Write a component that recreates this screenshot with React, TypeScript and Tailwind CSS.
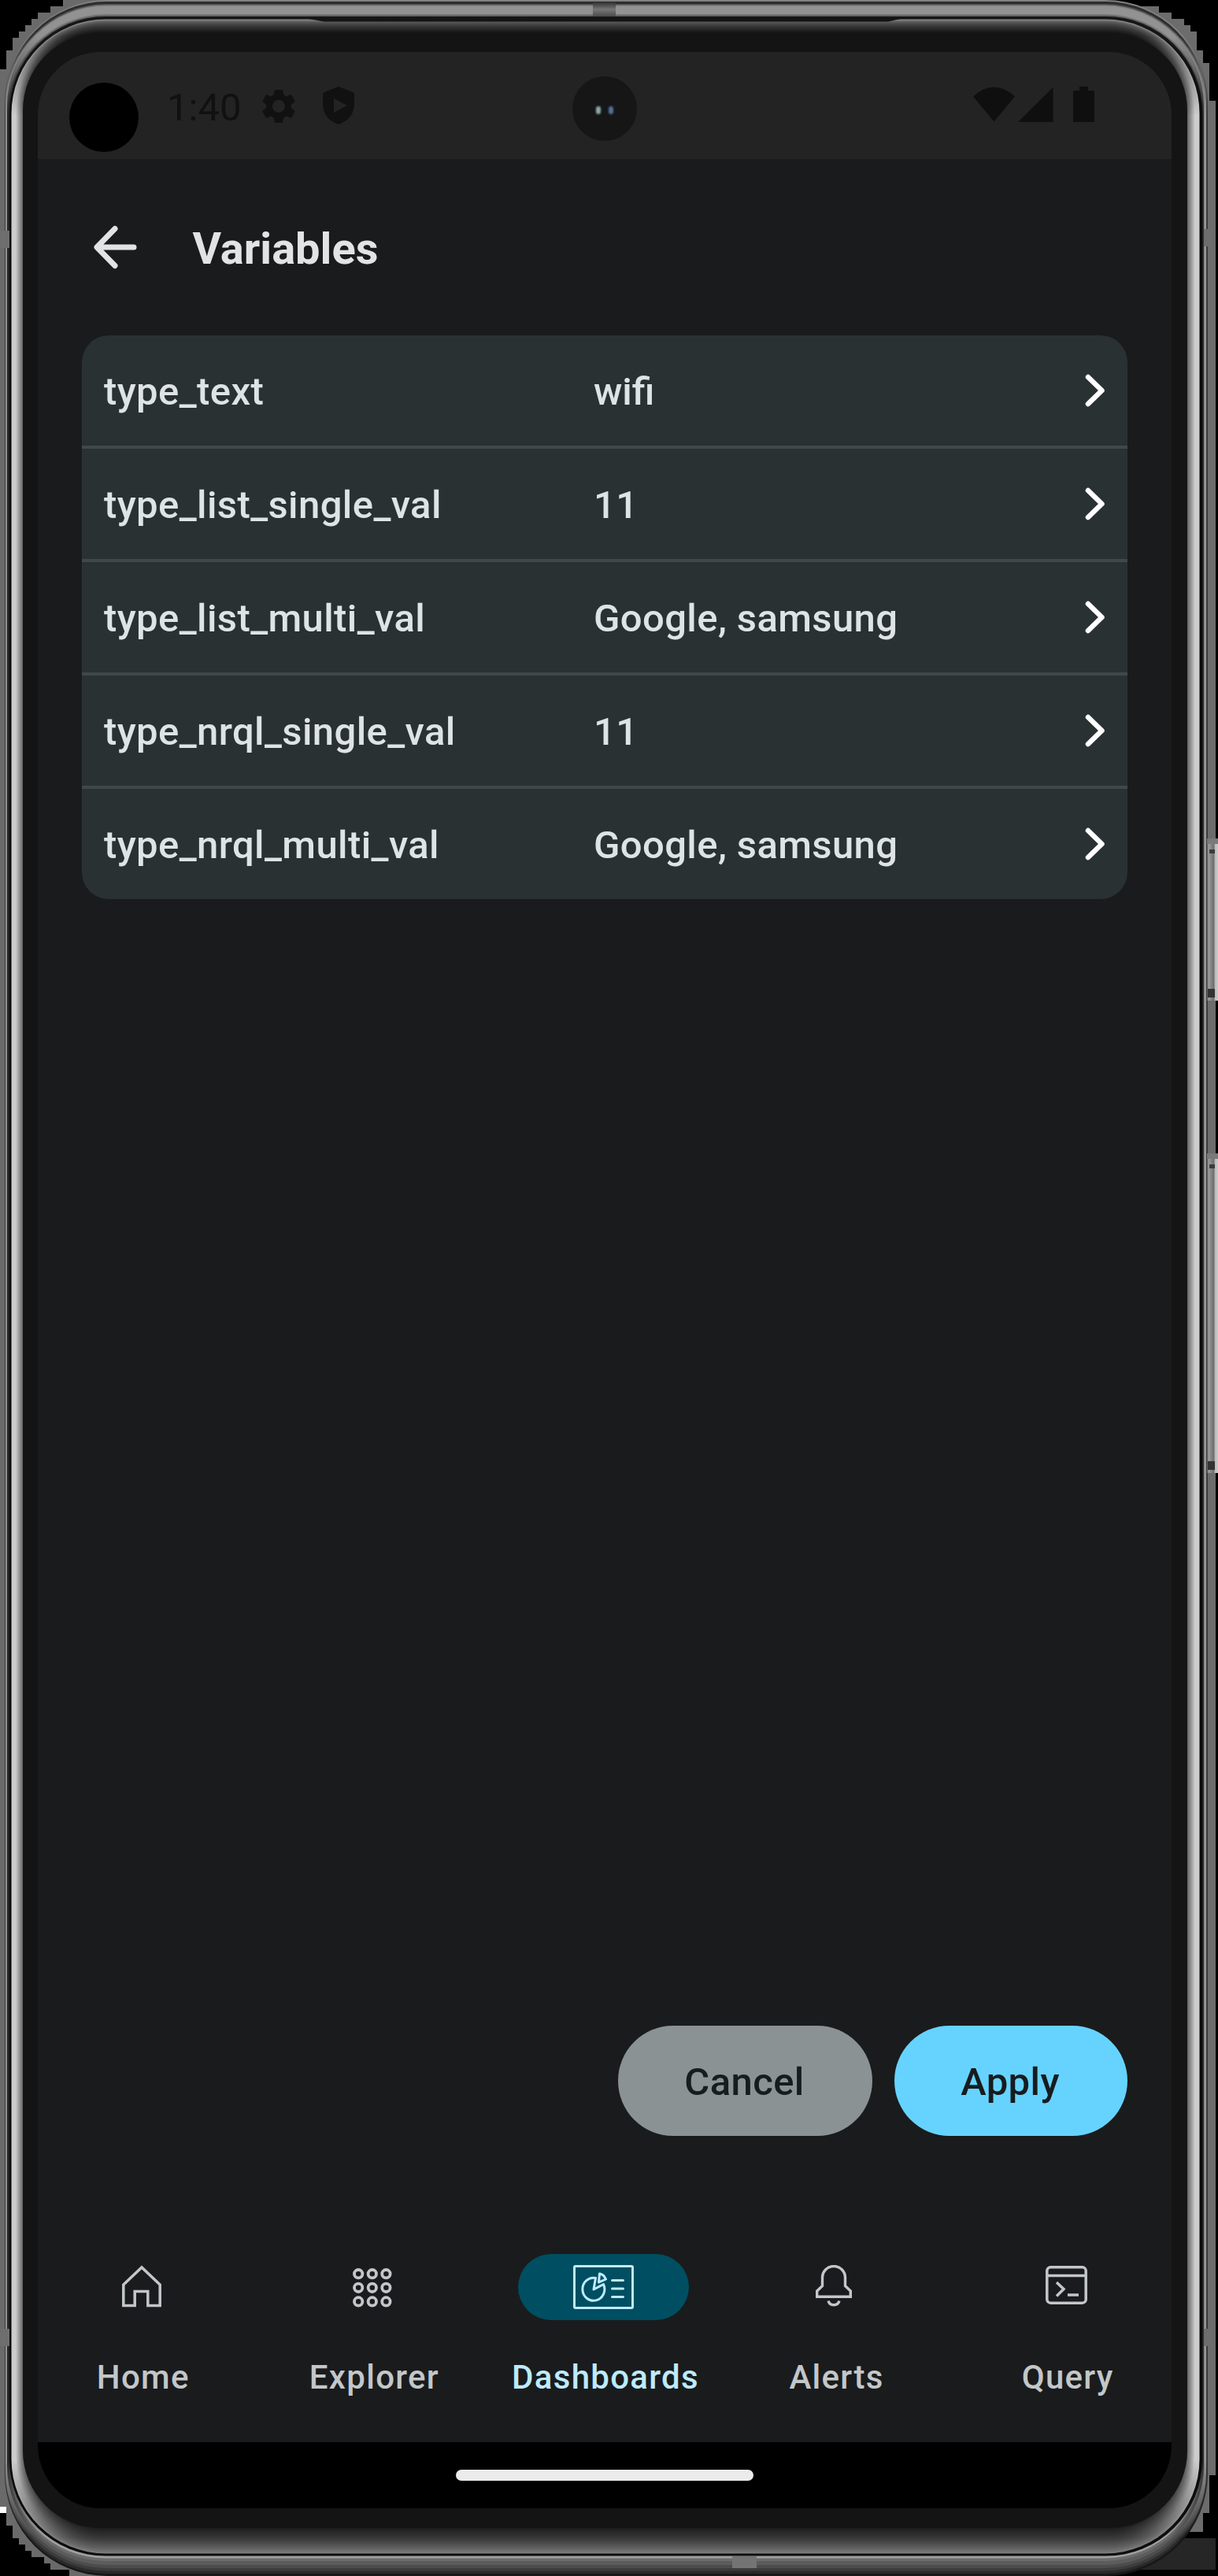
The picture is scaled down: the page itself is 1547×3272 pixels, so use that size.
import React from "react";

const variables = [
  { name: "type_text", value: "wifi" },
  { name: "type_list_single_val", value: "11" },
  { name: "type_list_multi_val", value: "Google, samsung" },
  { name: "type_nrql_single_val", value: "11" },
  { name: "type_nrql_multi_val", value: "Google, samsung" },
];

type Layer = {
  l: number;
  t: number;
  r: number;
  b: number;
  rad: number;
  top: string;
  side: string;
  bottom: string;
};

const grey = (v: number) => `rgb(${Math.round(v)},${Math.round(v)},${Math.round(v)})`;

const STEPS = 15;

// Nested outlines of the metal rim, from the outside to the glass.
const layers: Layer[] = [
  { l: 6, t: 0, r: 1534, b: 3272, rad: 130, top: "#808080", side: "#3a3a3a", bottom: "#181818" },
  { l: 7, t: 2, r: 1532, b: 3269, rad: 128, top: "#2c2c2c", side: "#a0a0a0", bottom: "#2a2a2a" },
  { l: 7.5, t: 5, r: 1531.2, b: 3265.5, rad: 127, top: "#505050", side: "#959595", bottom: "#3c3c3c" },
  { l: 8, t: 6.5, r: 1530.5, b: 3262, rad: 127, top: "#858585", side: "#8a8a8a", bottom: "#4c4c4c" },
  { l: 9, t: 8, r: 1529, b: 3258, rad: 126, top: "#929292", side: "#303030", bottom: "#5c5c5c" },
  { l: 9.5, t: 18, r: 1528.5, b: 3253, rad: 124, top: "#7a7a7a", side: "#2a2a2a", bottom: "#6c6c6c" },
  { l: 10, t: 19.500, r: 1528, b: 3249.500, rad: 124, top: "#5a5a5a", side: "#262626", bottom: "#a0a0a0" },
  { l: 12, t: 21, r: 1527, b: 3246.500, rad: 122, top: "#161616", side: "#0c0c0c", bottom: "#0e0e0e" },
  ...Array.from({ length: STEPS }, (_, i) => {
    const k = i / (STEPS - 1);
    return {
      l: 14.5 + 14 * k,
      t: 24.5 + 17 * k,
      r: 1523.5 - 15 * k,
      b: 3243.5 - 31 * k,
      rad: 120 - 20 * k,
      top: grey(140 - 120 * Math.sqrt(k)),
      side: grey(k < 0.35 ? 205 : 205 - 105 * ((k - 0.35) / 0.65)),
      bottom: grey(122 - 102 * Math.pow(k, 0.85)),
    };
  }),
  { l: 29, t: 42, r: 1508, b: 3211, rad: 98, top: "#141414", side: "#141414", bottom: "#141414" },
];

function DeviceFrame() {
  return (
    <svg className="absolute inset-0 h-full w-full" viewBox="0 0 1547 3272" aria-hidden="true">
      <defs>
        {layers.map((y, i) => (
          <linearGradient key={i} id={`rim${i}`} gradientUnits="userSpaceOnUse" x1="0" y1="0" x2="0" y2="3272">
            <stop offset="0.014" stopColor={y.top} />
            <stop offset="0.045" stopColor={y.side} />
            <stop offset="0.955" stopColor={y.side} />
            <stop offset="0.985" stopColor={y.bottom} />
          </linearGradient>
        ))}
        <linearGradient id="button" x1="0" x2="1" y1="0" y2="0">
          <stop offset="0" stopColor="#555" />
          <stop offset="0.15" stopColor="#a0a0a0" />
          <stop offset="0.3" stopColor="#8c8c8c" />
          <stop offset="0.62" stopColor="#6e6e6e" />
          <stop offset="0.75" stopColor="#bbb" />
          <stop offset="1" stopColor="#ccc" />
        </linearGradient>
        <linearGradient id="tick" x1="0" x2="0" y1="0" y2="1">
          <stop offset="0" stopColor="#333" />
          <stop offset="0.5" stopColor="#777" />
          <stop offset="1" stopColor="#4a4a4a" />
        </linearGradient>
      </defs>
      <path
        fill="#6a6a6a"
        d="M0 88H8V64H16V48H24V40H32V32H40V24H48V16H64V8H80V0H140V130H12V3130H140V3272H88V3264H64V3256H56V3248H40V3240H32V3232H24V3224H16V3208H8V3184H0Z"
      />
      <path fill="#fff" d="M0 3184H8V3192H0Z" />
      <path
        fill="#6c6c6c"
        d="M1400 8H1472V16H1488V24H1504V32H1512V40H1520V64H1528V80H1536V128H1544V3144H1536V3192H1528V3216H1400V3100H1528V150H1400Z"
      />
      <path fill="#262626" d="M1400 3224H1544V3264H1400Z" />
      {layers.map((y, i) => (
        <rect key={i} x={y.l} y={y.t} width={y.r - y.l} height={y.b - y.t} rx={y.rad} fill={`url(#rim${i})`} />
      ))}
      <path fill="#141414" d="M392 24L412 27.5H1128L1148 23Z" />
      <rect x="753" y="3" width="29" height="18" fill="url(#tick)" />
      <rect x="930" y="3247" width="31" height="15" fill="#747474" />
      <path fill="#6e6e6e" d="M0 293H12V315H0ZM1529 291H1540V313H1529ZM0 2958H12V2980H0ZM1529 2958H1540V2980H1529Z" />
      <path fill="#000" d="M1544 128H1547V3272H1544Z" />
      {[
        [1065, 1271],
        [1465, 1871],
      ].map(([a, b]) => (
        <g key={a}>
          <rect x="1533" y={a} width="14" height={b - a} fill="url(#button)" />
          <rect x="1533" y={a} width="14" height="7" fill="#7a7a7a" />
          <rect x="1536" y={a + 14} width="7" height="5" fill="#3a3a3a" />
          <rect x="1534" y={b - 15} width="9" height="11" fill="#333" />
        </g>
      ))}
    </svg>
  );
}

function StatusBar() {
  return (
    <div className="relative flex h-[136px] shrink-0 items-start bg-[#232323] text-[#111111]">
      <div className="mt-[39px] ml-10 h-[88px] w-[88px] rounded-full bg-black" />
      <span className="mt-[46px] ml-[36px] w-[96px] text-[49px] leading-[49px]">1:40</span>
      <svg className="mt-[47px] ml-[24px] h-[44px] w-[44px]" viewBox="2 2 20 20" fill="currentColor">
        <path d="M19.14 12.94c.04-.3.06-.61.06-.94 0-.32-.02-.64-.07-.94l2.03-1.58c.18-.14.23-.41.12-.61l-1.92-3.32c-.12-.22-.37-.29-.59-.22l-2.39.96c-.5-.38-1.03-.7-1.62-.94l-.36-2.54c-.04-.24-.24-.41-.48-.41h-3.84c-.24 0-.43.17-.47.41l-.36 2.54c-.59.24-1.13.57-1.62.94l-2.39-.96c-.22-.08-.47 0-.59.22L2.74 8.87c-.12.21-.08.47.12.61l2.03 1.58c-.05.3-.09.63-.09.94s.02.64.07.94l-2.03 1.58c-.18.14-.23.41-.12.61l1.92 3.32c.12.22.37.29.59.22l2.39-.96c.5.38 1.03.7 1.62.94l.36 2.54c.05.24.24.41.48.41h3.84c.24 0 .44-.17.47-.41l.36-2.54c.59-.24 1.13-.56 1.62-.94l2.39.96c.22.08.47 0 .59-.22l1.92-3.32c.12-.22.07-.47-.12-.61l-2.01-1.58zM12 15.6c-1.98 0-3.6-1.62-3.6-3.6s1.62-3.6 3.6-3.6 3.6 1.62 3.6 3.6-1.62 3.6-3.6 3.6z" />
      </svg>
      <svg className="mt-[44px] ml-[34px] h-[48px] w-[40px]" viewBox="0 0 40 48" fill="currentColor" fillRule="evenodd">
        <path d="M20 0L38 7Q40 8 40 10V22C40 35 32 44 20 48C8 44 0 35 0 22V10Q0 8 2 7ZM14 15V33L31 24Z" />
      </svg>
      <div className="absolute top-[31px] left-[679px] flex h-[82px] w-[82px] items-center justify-center gap-[10px] rounded-full bg-[#161616] pt-[3px]">
        <span className="h-[10px] w-[6px] rounded-full bg-[#8fa8a8] blur-[1px]" />
        <span className="h-[10px] w-[6px] rounded-full bg-[#5a6f98] blur-[1px]" />
      </div>
      <svg className="mt-[44px] mr-[98px] ml-auto h-[46px] w-[154px]" viewBox="0 0 154 46" fill="#0f0f0f">
        <path d="M0 12.500Q26 -11 53 12.500L26.500 44.500Z" />
        <path d="M57 45L101.500 1V45Z" />
        <path d="M127 7Q127 5 129 5H135V0H146V5H152Q154 5 154 7V45H127Z" />
      </svg>
    </div>
  );
}

function HomeIcon() {
  return (
    <svg width="50" height="54" viewBox="0 0 50 54" fill="none" stroke="currentColor" strokeWidth="3.500">
      <path d="M1.800 25L25 3L48.200 25V51.500H32.800V33.500H16.200V51.500H1.800Z" />
    </svg>
  );
}

function ExplorerIcon() {
  return (
    <svg width="50" height="50" viewBox="0 0 50 50" fill="none" stroke="currentColor" strokeWidth="3.800">
      {[7.2, 24.8, 42.4].map((y) => [7.2, 24.8, 42.4].map((x) => <circle key={`${x}-${y}`} cx={x} cy={y} r="5.200" />))}
    </svg>
  );
}

function DashboardIcon() {
  return (
    <svg width="77" height="56" viewBox="0 0 77 56" fill="none" stroke="currentColor" strokeWidth="3" strokeLinecap="round" strokeLinejoin="round">
      <rect x="1.500" y="1.500" width="74" height="53" rx="1.500" />
      <path d="M28.500 16.500A14 14.500 0 1 0 38.500 24.500L26 31Z" />
      <path d="M33.500 11Q39 12 41.500 18L32.500 22Z" />
      <path d="M49.500 19.500H63.500M49.500 30H63.500M49.500 40.500H63.500" />
    </svg>
  );
}

function BellIcon() {
  return (
    <svg width="46" height="53" viewBox="0 0 46 53" fill="none" stroke="currentColor" strokeWidth="3.400">
      <path d="M8.500 16A14.500 14.500 0 0 1 37.500 16V26.500L44.300 33V40.300H1.700V33L8.500 26.500Z" />
      <path d="M16 45.500C18 52.500 28 52.500 30 45.500" />
    </svg>
  );
}

function QueryIcon() {
  return (
    <svg width="53" height="49" viewBox="0 0 53 49" fill="none" stroke="currentColor" strokeWidth="3.500">
      <rect x="1.800" y="1.800" width="49.400" height="45.400" rx="4.500" />
      <path d="M2 12.500H51" />
      <path d="M14 21L23 29.500L14 38.500M28 37H42" />
    </svg>
  );
}

const tabs = [
  { label: "Home", icon: <HomeIcon />, shift: "pb-[3px]" },
  { label: "Explorer", icon: <ExplorerIcon />, shift: "pt-[1px]" },
  { label: "Dashboards", icon: <DashboardIcon />, shift: "" },
  { label: "Alerts", icon: <BellIcon />, shift: "pr-[3px] pb-[4px]" },
  { label: "Query", icon: <QueryIcon />, shift: "pb-[6px]" },
];

export default function App() {
  return (
    <div className="relative h-[3272px] w-[1547px] overflow-hidden bg-black pt-[66px] pl-[48px] font-['Roboto',sans-serif]">
      <DeviceFrame />
      <div className="relative flex h-[3120px] w-[1440px] flex-col overflow-hidden rounded-[80px] bg-[#1a1b1c]">
        <StatusBar />
        <header className="flex h-[224px] shrink-0 items-center pl-[70px]">
          <svg width="58" height="58" viewBox="0 0 58 58" fill="none" stroke="#e2e3e5" strokeWidth="7" strokeLinecap="round" strokeLinejoin="round">
            <path d="M52 29H6M28 5.500L5 29L28 52.500" />
          </svg>
          <h1 className="ml-[68.500px] pt-1 text-[56px] leading-[56px] font-bold text-[#e2e3e5]">Variables</h1>
        </header>
        <ul className="mx-14 shrink-0 divide-y-[4px] divide-[#404849] overflow-hidden rounded-[34px] bg-[#2a3133]">
          {variables.map((v) => (
            <li key={v.name} className="box-content flex h-[140px] items-center pr-[28px] pl-7 text-[49px] leading-[56px] font-medium tracking-[0.400px] text-[#dee3e4]">
              <span className="w-[622px] pt-1">{v.name}</span>
              <span className={v.value === "wifi" ? "flex-1 pt-1 tracking-normal" : "flex-1 pt-1"}>{v.value}</span>
              <svg width="28" height="44" viewBox="0 0 28 44" fill="none" stroke="#fff" strokeWidth="6.500" strokeLinecap="round" strokeLinejoin="round">
                <path d="M6 5L23.500 22L6 39" />
              </svg>
            </li>
          ))}
        </ul>
        <div className="mt-auto mr-14 mb-[122px] flex justify-end gap-7 text-[49px] leading-[56px] font-medium tracking-[0.400px] text-[#171c1e]">
          <button className="h-[140px] w-[323px] rounded-full bg-[#8b9294] pt-1 pr-[2px]">Cancel</button>
          <button className="h-[140px] w-[296px] rounded-full bg-[#66d3ff] pt-1 pr-[2px]">Apply</button>
        </div>
        <nav className="grid h-[267px] shrink-0 grid-cols-5 gap-7 pt-[28px]">
          {tabs.map((t) => (
            <div key={t.label} className={t.label === "Dashboards" ? "flex flex-col items-center text-[#bdeaff]" : "flex flex-col items-center text-[#c2c7c9]"}>
              <div className={t.label === "Dashboards" ? "mr-[3px] flex h-[84px] w-[217px] items-center justify-center rounded-full bg-[#004e61]" : `mr-[2px] flex h-[84px] w-[217px] items-center justify-center ${t.shift}`}>
                {t.icon}
              </div>
              <span className="mt-[45px] pl-[2px] text-[42px] leading-[56px] font-medium tracking-[1.300px]">{t.label}</span>
            </div>
          ))}
        </nav>
        <div className="flex h-[84px] shrink-0 justify-center bg-black pt-[35px]">
          <div className="h-[14px] w-[378px] rounded-full bg-[#ebebeb]" />
        </div>
      </div>
    </div>
  );
}
